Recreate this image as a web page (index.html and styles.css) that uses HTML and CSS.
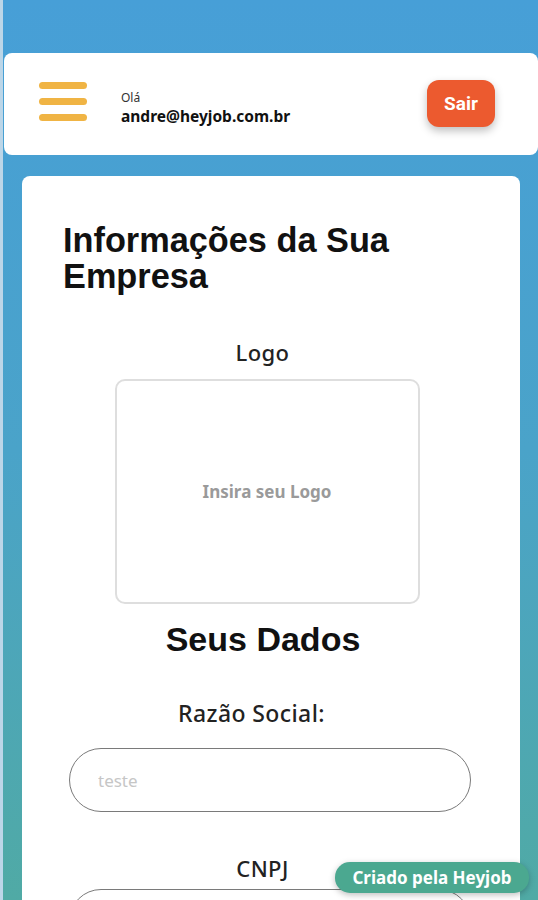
FILE: index.html
```html
<!DOCTYPE html>
<html lang="pt-BR">
<head>
<meta charset="utf-8">
<title>Informações da Sua Empresa</title>
<link rel="stylesheet" href="styles.css">
</head>
<body>
<div class="page">
  <header class="topbar">
    <button class="menu" aria-label="Menu">
      <span></span><span></span><span></span>
    </button>
    <div class="user">
      <div class="hello">Olá</div>
      <div class="email">andre@heyjob.com.br</div>
    </div>
    <button class="logout">Sair</button>
  </header>

  <main class="card">
    <h1 class="title">Informações da Sua Empresa</h1>
    <div class="field-label logo-label">Logo</div>
    <div class="logo-box">Insira seu Logo</div>
    <h2 class="subtitle">Seus Dados</h2>
    <label class="field-label razao">Razão Social:</label>
    <input class="input input-razao" placeholder="teste">
    <label class="field-label cnpj">CNPJ</label>
    <input class="input input-cnpj" placeholder="">
  </main>

  <a class="badge">Criado pela Heyjob</a>
</div>
</body>
</html>
```
FILE: styles.css
```css
* { box-sizing: border-box; }
html, body { margin: 0; padding: 0; }
body {
  height: 900px;
  overflow: hidden;
  background: linear-gradient(180deg, #479fd7 0%, #4aa3c9 50%, #50aaa5 100%);
  border-left: 3px solid #bcd6e8;
  font-family: "Noto Sans", Arial, sans-serif;
}
.page {
  padding-top: 53px;
  position: relative;
  height: 900px;
  overflow: hidden;
}
.topbar {
  margin-left: 1px;
  height: 102px;
  background: #fff;
  border-radius: 8px;
  display: flex;
  align-items: center;
  padding: 0 43px 0 35px;
}
.menu {
  border: 0;
  background: none;
  padding: 0;
  width: 48px;
  display: flex;
  flex-direction: column;
  gap: 9px;
  margin-top: -6px;
}
.menu span {
  display: block;
  height: 7px;
  border-radius: 4px;
  background: #f0b444;
}
.user {
  margin-left: 34px;
  flex: 1;
  margin-top: 6px;
}
.hello {
  font-size: 12px;
  color: #333;
  line-height: 17px;
}
.email {
  font-size: 15.5px;
  font-weight: 700;
  color: #111;
  line-height: 20px;
}
.logout {
  border: 0;
  width: 68px;
  height: 47px;
  border-radius: 12px;
  background: #ec5a2f;
  color: #fff;
  font-family: Roboto, Arial, sans-serif;
  font-weight: 700;
  font-size: 19px;
  box-shadow: 0 4px 8px rgba(0,0,0,0.25);
  margin-top: -2px;
}
.card {
  margin: 21px 18px 0 19px;
  background: #fff;
  border-radius: 8px 8px 0 0;
  padding: 46px 49px 0 41px;
  display: flex;
  flex-direction: column;
  align-items: center;
  height: 724px;
  overflow: hidden;
}
.card > * { flex-shrink: 0; }
.title {
  align-self: stretch;
  margin: 0;
  font-family: "Liberation Sans", Arial, sans-serif;
  font-weight: 700;
  font-size: 34.3px;
  line-height: 36px;
  color: #111;
}
.field-label {
  font-size: 22px;
  font-weight: 500;
  color: #222;
  line-height: 30px;
  letter-spacing: 0.4px;
  margin-right: 9px;
}
.logo-label {
  margin-top: 43px;
}
.logo-box {
  margin-top: 12px;
  width: 305px;
  height: 225px;
  border: 2px solid #dedede;
  border-radius: 10px;
  display: flex;
  align-items: center;
  justify-content: center;
  color: #9a9a9a;
  font-weight: 700;
  font-size: 17px;
}
.subtitle {
  margin: 15px 8px 0 0;
  font-family: "Liberation Sans", Arial, sans-serif;
  font-weight: 700;
  font-size: 34px;
  line-height: 40px;
  color: #111;
}
.razao {
  margin-top: 39px;
  margin-right: 31px;
  font-size: 23px;
}
.input {
  width: 402px;
  height: 64px;
  border: 1.3px solid #7a7a7a;
  border-radius: 32px;
  padding: 0 28px;
  font-family: "Noto Sans", Arial, sans-serif;
  font-size: 17px;
  outline: none;
  margin-left: 6px;
}
.input::placeholder { color: #c6c6c6; }
.input-razao { margin-top: 20px; }
.cnpj { margin-top: 41px; }
.input-cnpj { margin-top: 6px; }
.badge {
  position: absolute;
  left: 332px;
  top: 862px;
  height: 31px;
  width: 194px;
  text-align: center;
  border-radius: 15px;
  background: #4ba890;
  color: #fff;
  font-weight: 700;
  font-size: 17px;
  line-height: 31px;
  box-shadow: 0 2px 6px rgba(0,0,0,0.25);
}
```
